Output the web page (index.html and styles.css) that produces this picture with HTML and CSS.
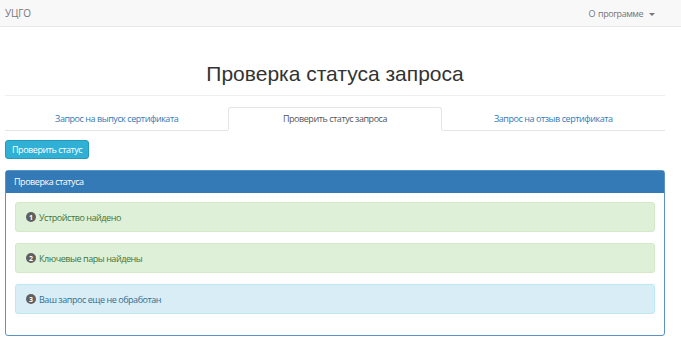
FILE: index.html
```html
<!DOCTYPE html>
<html lang="ru">
<head>
  <meta charset="UTF-8">
  <meta name="viewport" content="width=device-width, initial-scale=1.0">
  <title>УЦГО — Проверка статуса запроса</title>
  <link rel="stylesheet" href="styles.css">
</head>
<body>
  <nav class="navbar">
    <a class="navbar__brand" href="#">УЦГО</a>
    <a class="navbar__menu" href="#">О программе <span class="caret"></span></a>
  </nav>

  <div class="container">
    <h1 class="page-header">Проверка статуса запроса</h1>

    <ul class="tabs">
      <li class="tabs__item"><a href="#">Запрос на выпуск сертификата</a></li>
      <li class="tabs__item tabs__item--active"><a href="#">Проверить статус запроса</a></li>
      <li class="tabs__item"><a href="#">Запрос на отзыв сертификата</a></li>
    </ul>

    <button type="button" class="btn-info">Проверить статус</button>

    <div class="panel">
      <div class="panel__heading">Проверка статуса</div>
      <div class="panel__body">
        <div class="alert alert--success"><span class="badge">1</span>Устройство найдено</div>
        <div class="alert alert--success"><span class="badge">2</span>Ключевые пары найдены</div>
        <div class="alert alert--info"><span class="badge">3</span>Ваш запрос еще не обработан</div>
      </div>
    </div>
  </div>
</body>
</html>
```

FILE: styles.css
```css
:root {
  --brand-blue: #337ab7;
  --text-dark: #333;
  --text-muted: #777;
  --border-light: #e7e7e7;
  --success-bg: #dff0d8;
  --success-border: #d6e9c6;
  --success-text: #3c763d;
  --info-bg: #d9edf7;
  --info-border: #bce8f1;
  --info-text: #31708f;
}

body {
  margin: 0;
  font-family: "Open Sans", "DejaVu Sans", sans-serif;
  font-size: 9px;
  letter-spacing: -0.45px;
  color: var(--text-dark);
  background: #fff;
}

a {
  text-decoration: none;
}

/* Navbar */
.navbar {
  display: flex;
  align-items: center;
  justify-content: space-between;
  height: 26px;
  padding: 0 26px 0 5px;
  background: #f8f8f8;
  border-bottom: 1px solid var(--border-light);
}

.navbar__brand {
  color: var(--text-muted);
  font-size: 10px;
  letter-spacing: -0.2px;
}

.navbar__menu {
  color: var(--text-muted);
  word-spacing: 1px;
}

.caret {
  display: inline-block;
  margin-left: 3px;
  vertical-align: middle;
  border-top: 3px solid var(--text-muted);
  border-left: 3px solid transparent;
  border-right: 3px solid transparent;
}

/* Content */
.container {
  padding: 0 16px 0 5px;
}

.page-header {
  margin: 34px 0 0;
  padding-bottom: 8px;
  border-bottom: 1px solid #eee;
  font-family: "Liberation Sans", Arial, sans-serif;
  font-size: 21px;
  font-weight: 400;
  letter-spacing: 0;
  line-height: 26px;
  text-align: center;
}

.tabs {
  display: flex;
  margin: 11px 0 0;
  padding: 0;
  list-style: none;
}

.tabs__item {
  flex: 1 1 0;
  text-align: center;
  border-bottom: 1px solid #e5e5e5;
}

.tabs__item a {
  display: block;
  padding: 5px 0;
  line-height: 12px;
  color: var(--brand-blue);
  border: 1px solid transparent;
  border-bottom: none;
  border-radius: 3px 3px 0 0;
}

.tabs__item--active {
  flex-grow: 0.955;
  border-bottom-color: transparent;
}

.tabs__item--active a {
  color: #555;
  border-color: #e5e5e5;
}

.btn-info {
  display: block;
  margin-top: 9px;
  padding: 3px 6px;
  font-family: inherit;
  font-size: 9px;
  letter-spacing: -0.45px;
  line-height: 11px;
  color: #fff;
  background: #31b0d5;
  border: 1px solid #269abc;
  border-radius: 3px;
}

.panel {
  margin-top: 11px;
  border: 1px solid #5b93c7;
  border-radius: 3px;
}

.panel__heading {
  padding: 0 8px;
  height: 22px;
  line-height: 22px;
  color: #fff;
  background: var(--brand-blue);
}

.panel__body {
  padding: 9px 9px 10px;
}

.alert {
  display: flex;
  align-items: center;
  height: 28px;
  margin-bottom: 11px;
  padding: 0 10px;
  border: 1px solid;
  border-radius: 3px;
}

.alert--success {
  color: var(--success-text);
  background: var(--success-bg);
  border-color: var(--success-border);
}

.alert--success + .alert--info {
  margin-top: 1px;
}

.alert--info {
  color: var(--info-text);
  background: var(--info-bg);
  border-color: var(--info-border);
}

.badge {
  display: inline-flex;
  align-items: center;
  justify-content: center;
  width: 10px;
  height: 10px;
  margin-right: 3px;
  border-radius: 50%;
  font-size: 7px;
  font-weight: 700;
  letter-spacing: 0;
  color: #fff;
  background: #606060;
}
```
